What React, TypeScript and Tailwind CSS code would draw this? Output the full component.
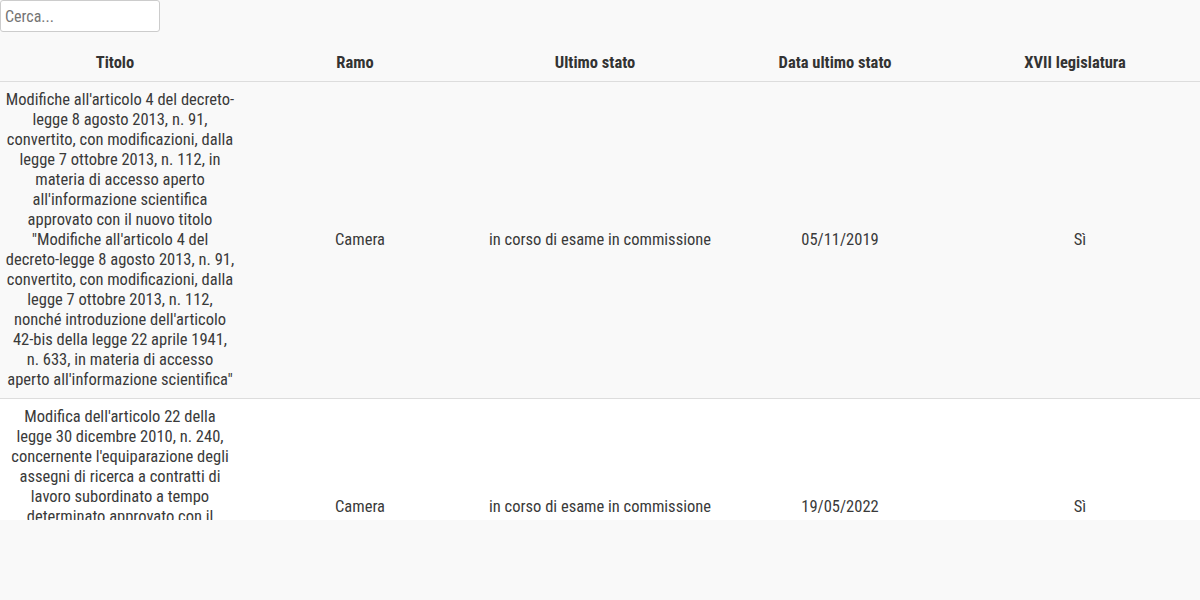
const rows = [
  {
    titolo:
      'Modifiche all\'articolo 4 del decreto-legge 8 agosto 2013, n. 91, convertito, con modificazioni, dalla legge 7 ottobre 2013, n. 112, in materia di accesso aperto all\'informazione scientifica approvato con il nuovo titolo "Modifiche all\'articolo 4 del decreto-legge 8 agosto 2013, n. 91, convertito, con modificazioni, dalla legge 7 ottobre 2013, n. 112, nonché introduzione dell\'articolo 42-bis della legge 22 aprile 1941, n. 633, in materia di accesso aperto all\'informazione scientifica"',
    ramo: 'Camera',
    stato: 'in corso di esame in commissione',
    data: '05/11/2019',
    xvii: 'Sì',
  },
  {
    titolo:
      'Modifica dell\'articolo 22 della legge 30 dicembre 2010, n. 240, concernente l\'equiparazione degli assegni di ricerca a contratti di lavoro subordinato a tempo determinato approvato con il nuovo titolo "Modifiche all\'articolo 22 della legge 30 dicembre 2010, n. 240, in materia di assegni di ricerca"',
    ramo: 'Camera',
    stato: 'in corso di esame in commissione',
    data: '19/05/2022',
    xvii: 'Sì',
  },
]

const headers = ['Titolo', 'Ramo', 'Ultimo stato', 'Data ultimo stato', 'XVII legislatura']

export default function App() {
  return (
    <div
      className="min-h-[600px] bg-[#f9f9f9] text-[16.5px] leading-5 text-[#3a3a3a] font-stretch-condensed"
      style={{ fontFamily: '"Roboto Condensed", Roboto, "Liberation Sans Narrow", sans-serif' }}
    >
      <input
        type="text"
        placeholder="Cerca..."
        className="block h-8 w-40 rounded-[3px] border border-[#ccc] bg-white px-1 text-[16px] text-[#333] placeholder:text-[#757575] outline-none"
      />
      <div className="mt-2.5 h-[478px] overflow-hidden">
        <table className="w-full table-fixed border-collapse">
          <thead>
            <tr className="border-b border-[#ddd]">
              {headers.map((h) => (
                <th key={h} className="h-[39px] pt-1 pb-0 pl-1 pr-[14px] text-center align-middle font-bold text-[#333]">
                  {h}
                </th>
              ))}
            </tr>
          </thead>
          <tbody>
            {rows.map((r, i) => (
              <tr key={i} className={i % 2 === 0 ? 'border-b border-[#ddd] bg-[#f9f9f9]' : 'bg-white'}>
                <td className="px-[5.5px] py-2 text-center align-middle">{r.titolo}</td>
                <td className="px-[5.5px] py-2 text-center align-middle">{r.ramo}</td>
                <td className="px-[5.5px] py-2 text-center align-middle">{r.stato}</td>
                <td className="px-[5.5px] py-2 text-center align-middle">{r.data}</td>
                <td className="px-[5.5px] py-2 text-center align-middle">{r.xvii}</td>
              </tr>
            ))}
          </tbody>
        </table>
      </div>
    </div>
  )
}
